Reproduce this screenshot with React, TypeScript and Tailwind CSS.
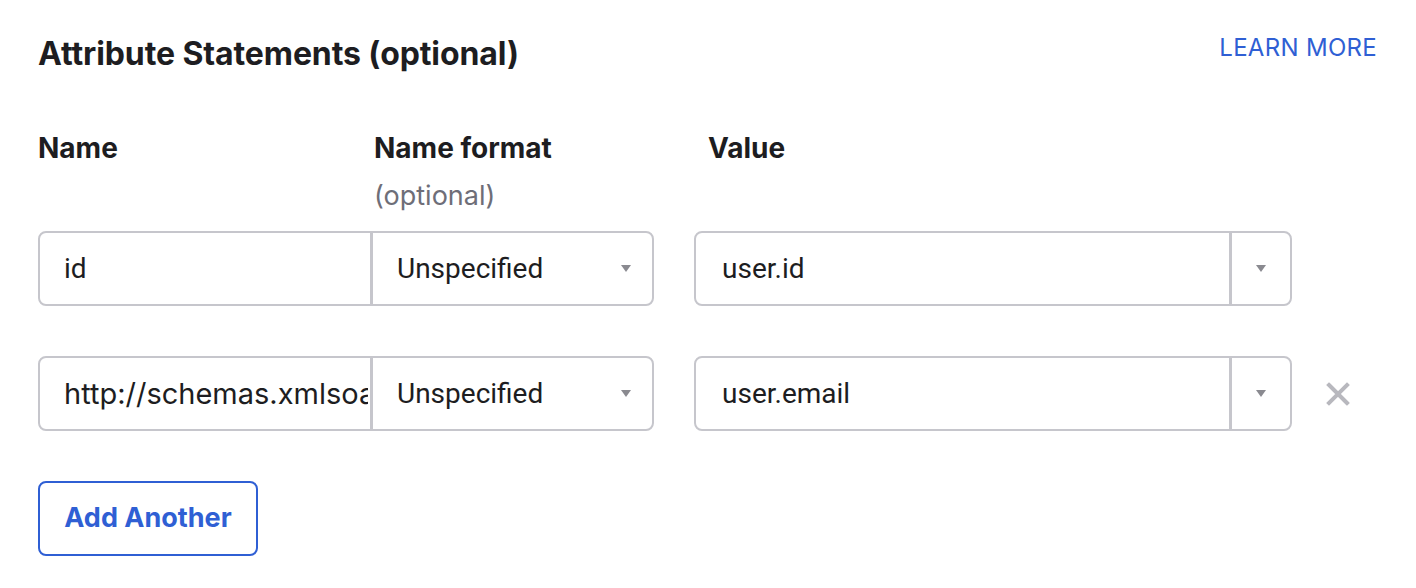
import React from 'react';

const rows = [
  { name: 'id', format: 'Unspecified', value: 'user.id', removable: false },
  { name: 'http://schemas.xmlsoap.org/ws/2005/05/identity/claims/emailaddress', format: 'Unspecified', value: 'user.email', removable: true },
];

function Caret() {
  return (
    <svg width="12" height="9" viewBox="0 0 12 9" className="shrink-0">
      <path d="M1 1H11L6 8Z" fill="#8a8a90" />
    </svg>
  );
}

export default function App() {
  return (
    <div className="w-[1416px] h-[588px] bg-white text-[#1d1d21] font-['Inter',sans-serif]">
      <div className="pl-[38px] pr-[38px] pt-[34px]">
        {/* Header */}
        <div className="flex items-start justify-between">
          <h2 className="text-[32px] font-bold leading-[40px] tracking-[-0.1px]">Attribute Statements (optional)</h2>
          <a className="text-[24px] leading-[28px] text-[#2f5fd4] tracking-[0.3px] mt-[0px] mr-[1px]">LEARN MORE</a>
        </div>

        {/* Column labels */}
        <div className="flex mt-[57px]">
          <div className="w-[336px] text-[28px] font-bold leading-[34px]">Name</div>
          <div className="w-[334px]">
            <div className="text-[28px] font-bold leading-[34px]">Name format</div>
            <div className="text-[27px] leading-[34px] text-[#6e6e78] mt-[14px]">(optional)</div>
          </div>
          <div className="text-[28px] font-bold leading-[34px]">Value</div>
        </div>

        {/* Rows */}
        <div className="flex flex-col gap-[50px] mt-[18px]">
          {rows.map((r, i) => (
            <div key={i} className="flex items-center">
              <div className="flex w-[616px] h-[75px] border-2 border-[#c6c6cc] rounded-[8px] overflow-hidden">
                <input
                  readOnly
                  value={r.name}
                  className={
                    r.name === 'id'
                      ? "w-[330px] shrink-0 min-w-0 pl-[24px] pr-[2px] bg-transparent outline-none text-[28px] text-[#1d1d21] font-['Roboto',sans-serif]"
                      : "w-[330px] shrink-0 min-w-0 pl-[24px] pr-[2px] bg-transparent outline-none text-[29px] text-[#1d1d21] font-['Inter',sans-serif]"
                  }
                />
                <div className="w-[3px] bg-[#c6c6cc]" />
                <div className="flex-1 flex items-center justify-between pl-[24px] pr-[20px] text-[28px] font-['Roboto',sans-serif]">
                  <span>{r.format}</span>
                  <Caret />
                </div>
              </div>
              <div className="flex w-[598px] h-[75px] border-2 border-[#c6c6cc] rounded-[8px] overflow-hidden ml-[40px]">
                <div className="flex-1 flex items-center pl-[26px] text-[28px] font-['Roboto',sans-serif]">{r.value}</div>
                <div className="w-[3px] bg-[#c6c6cc]" />
                <div className="w-[58px] flex items-center justify-center">
                  <Caret />
                </div>
              </div>
              {r.removable && (
                <button className="ml-[33px] flex items-center justify-center w-[26px] h-[26px]">
                  <svg width="24" height="24" viewBox="0 0 24 24">
                    <path d="M3 3L21 21M21 3L3 21" stroke="#b8b8be" strokeWidth="4" strokeLinecap="square" />
                  </svg>
                </button>
              )}
            </div>
          ))}
        </div>

        {/* Add another */}
        <button className="mt-[50px] w-[220px] h-[75px] border-2 border-[#2f5fd4] rounded-[8px] text-[#2f5fd4] text-[27px] font-bold">
          Add Another
        </button>
      </div>
    </div>
  );
}
